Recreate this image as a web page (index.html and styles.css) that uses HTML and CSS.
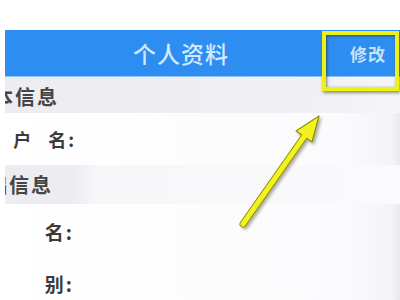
FILE: index.html
```html
<!DOCTYPE html>
<html lang="zh">
<head>
<meta charset="utf-8">
<link rel="stylesheet" href="styles.css">
</head>
<body>
<div class="screen">
  <header class="topbar">
    <div class="title">个人资料</div>
    <div class="edit">修改</div>
  </header>
  <div class="section s1"><span class="sec-text t1">本信息</span></div>
  <div class="row r1">
    <div class="label"><span>户</span><span class="g">名</span><span class="colon">:</span></div>
  </div>
  <div class="section s2"><span class="sec-text t2">础信息</span></div>
  <div class="row r2">
    <div class="label"><span>名</span><span class="colon">:</span></div>
  </div>
  <div class="row r3">
    <div class="label"><span>别</span><span class="colon">:</span></div>
  </div>
</div>
<div class="highlight"></div>
<svg class="arrow" width="400" height="300" viewBox="0 0 400 300">
  <line x1="243" y1="224" x2="306" y2="134" stroke="#8f8f10" stroke-width="7" stroke-linecap="round"/>
  <polygon points="319,116 296,131 312,142" fill="#f2f21e" stroke="#8f8f10" stroke-width="1.2" stroke-linejoin="round"/>
  <line x1="243" y1="224" x2="306" y2="134" stroke="#f2f21e" stroke-width="5" stroke-linecap="round"/>
</svg>
</body>
</html>
```
FILE: styles.css
```css
html, body {
  margin: 0;
  padding: 0;
  width: 400px;
  height: 300px;
  overflow: hidden;
  background: #ffffff;
  font-family: "Noto Sans CJK SC", "Noto Sans", sans-serif;
}
.screen {
  margin: 30px 0 0 5px;
  width: 395px;
  height: 270px;
  overflow: hidden;
  background: linear-gradient(to right, #ffffff 0, #fbfbfd 85%, #f4f4f7 98%, #e9e9ed 100%);
}
.topbar {
  height: 47px;
  background: #2d8df1;
  border-bottom: 1px solid #8cc3f5;
  display: flex;
  align-items: center;
  box-sizing: border-box;
}
.title {
  margin-left: 128px;
  font-size: 23px;
  font-weight: 500;
  color: #d3e9ff;
  letter-spacing: 1px;
}
.edit {
  margin-left: auto;
  margin-right: 14px;
  font-size: 17px;
  font-weight: 600;
  color: #c9e1fb;
  letter-spacing: 1px;
}
.section {
  display: flex;
  align-items: center;
  overflow: hidden;
}
.s1 {
  height: 36px;
  padding-top: 3px;
  box-sizing: border-box;
  background: linear-gradient(to right, #ececf1 0, #efeff4 75%, #f6f6f9 100%);
}
.s2 {
  height: 39px;
  background: linear-gradient(to right, #ececf1 0, #ececf1 70px, #f7f7fa 90px, #fafafc 100%);
}
.sec-text {
  font-size: 20px;
  font-weight: 600;
  color: #454545;
  white-space: nowrap;
  letter-spacing: 2px;
}
.t1 { margin-left: -12px; }
.t2 { margin-left: -18px; }
.row {
  display: flex;
  align-items: center;
}
.r1 { height: 52px; }
.r2 { height: 52px; padding-top: 1px; }
.r3 { height: 52px; }
.label {
  width: 69px;
  display: flex;
  justify-content: flex-end;
  font-size: 18px;
  font-weight: 600;
  color: #3b3b3b;
  white-space: nowrap;
}
.label .g { margin-left: 17px; }
.label .colon { margin-left: 2px; }
.r2 .label, .r3 .label { font-size: 19px; width: 67px; }
.highlight {
  position: absolute;
  left: 322px;
  top: 31px;
  width: 77px;
  height: 60px;
  box-sizing: border-box;
  border: 4px solid #eef018;
  box-shadow: 1px 2px 3px rgba(60, 60, 0, 0.55), inset 1px 1px 3px rgba(40, 40, 0, 0.6);
}
.arrow {
  position: absolute;
  left: 0;
  top: 0;
  filter: drop-shadow(2px 2px 1.5px rgba(80, 80, 60, 0.45));
}
```
